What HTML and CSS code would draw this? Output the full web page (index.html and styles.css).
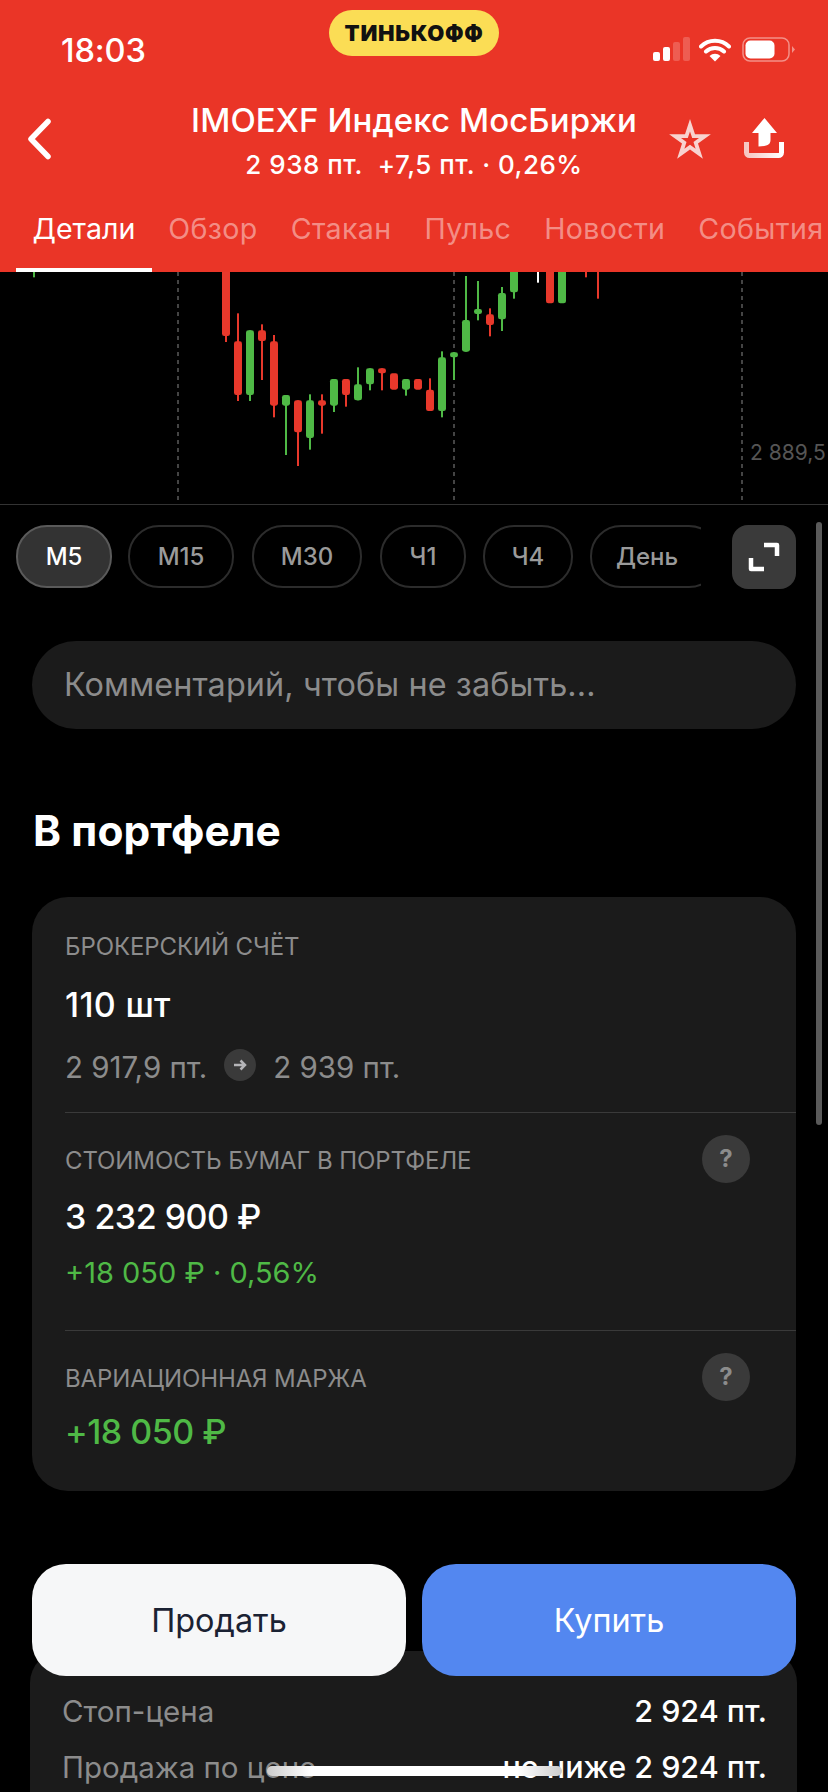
FILE: index.html
```html
<!DOCTYPE html>
<html lang="ru">
<head>
<meta charset="utf-8">
<title>IMOEXF</title>
<link rel="stylesheet" href="styles.css">
</head>
<body>
<div class="screen">
  <header class="top">
    <div class="status">
      <div class="time">18:03</div>
      <div class="brand">ТИНЬКОФФ</div>
      <div class="sys">
        <svg class="sig" width="38" height="24" viewBox="0 0 38 24"><rect x="0" y="15" width="7" height="9" rx="2" fill="#fff"/><rect x="10" y="10" width="7" height="14" rx="2" fill="#fff"/><rect x="20" y="5" width="7" height="19" rx="2" fill="#fff" opacity=".2"/><rect x="30" y="0" width="7" height="24" rx="2" fill="#fff" opacity=".2"/></svg>
        <svg class="wifi" width="32" height="25" viewBox="0 0 32 25"><path d="M2 9.500a20 20 0 0 1 28 0M7 14.500a13 13 0 0 1 18 0" fill="none" stroke="#fff" stroke-width="4" stroke-linecap="round"/><path d="M10.500 19a8 8 0 0 1 11 0L16 24.500z" fill="#fff"/></svg>
        <svg class="batt" width="54" height="25" viewBox="0 0 54 25"><rect x="1" y="1" width="46" height="23" rx="7" fill="none" stroke="#fff" stroke-opacity=".45" stroke-width="1.500"/><rect x="3.500" y="3.500" width="29" height="18" rx="5" fill="#fff"/><path d="M50 9l3 3.500L50 16z" fill="#fff" opacity=".45"/></svg>
      </div>
    </div>
    <div class="nav">
      <div class="nav-left">
        <svg width="26" height="42" viewBox="0 0 26 42"><path d="M22 3.500L5 21l17 17.500" fill="none" stroke="#fff" stroke-width="5.500" stroke-linecap="round" stroke-linejoin="round"/></svg>
      </div>
      <div class="nav-mid">
        <div class="title">IMOEXF Индекс МосБиржи</div>
        <div class="sub">2 938 пт.&nbsp;&nbsp;+7,5 пт. · 0,26%</div>
      </div>
      <div class="nav-right">
        <svg width="44" height="42" viewBox="0 0 44 42"><path d="M22 1L27 16.200H42.900L30 25.600L34.900 40.800L22 31.400L9.100 40.800L14 25.600L1.100 16.200H17z" fill="#f8d3cf"/><path d="M22 13.500L24.200 20H31L25.500 24.100L27.600 30.700L22 26.700L16.400 30.700L18.500 24.100L13 20H19.800z" fill="#ea3527"/></svg>
        <svg width="40" height="40" viewBox="0 0 40 40"><defs><linearGradient id="tray" x1="0" x2="1" y1="0" y2="0"><stop offset="0" stop-color="#f6c6c1"/><stop offset="1" stop-color="#fff"/></linearGradient></defs><path d="M20.500 0L33 15H26.500V22C26.500 26 24 28.500 14.500 28.500V15H8z" fill="#fff"/><path d="M2.500 24V34.500A3 3 0 0 0 5.500 37.500H34.500A3 3 0 0 0 37.500 34.500V24" fill="none" stroke="url(#tray)" stroke-width="5"/></svg>
      </div>
    </div>
    <nav class="tabs">
      <div class="tab active">Детали</div>
      <div class="tab">Обзор</div>
      <div class="tab">Стакан</div>
      <div class="tab">Пульс</div>
      <div class="tab">Новости</div>
      <div class="tab">События</div>
    </nav>
  </header>

  <section class="chart">
    <svg class="chart-svg" width="828" height="232" viewBox="0 0 828 232">
      <g class="grid">
        <line x1="178" x2="178" y1="0" y2="232"/>
        <line x1="454" x2="454" y1="0" y2="232"/>
        <line x1="742" x2="742" y1="0" y2="232"/>
      </g>
      <g transform="translate(180 -7) scale(.33333)">
        <g class="up">
          <rect x="-441" y="0" width="6" height="37"/>
          <rect x="207" y="196" width="6" height="212"/><rect x="198" y="196" width="24" height="194" rx="7"/>
          <rect x="315" y="390" width="6" height="180"/><rect x="306" y="390" width="24" height="32" rx="7"/>
          <rect x="387" y="388" width="6" height="166"/><rect x="378" y="406" width="24" height="113" rx="7"/>
          <rect x="459" y="342" width="6" height="99"/><rect x="450" y="342" width="24" height="80" rx="7"/>
          <rect x="531" y="307" width="6" height="99"/><rect x="522" y="358" width="24" height="48" rx="7"/>
          <rect x="567" y="310" width="6" height="66"/><rect x="558" y="310" width="24" height="48" rx="7"/>
          <rect x="675" y="342" width="6" height="50"/><rect x="666" y="342" width="24" height="32" rx="7"/>
          <rect x="783" y="259" width="6" height="198"/><rect x="774" y="277" width="24" height="161" rx="7"/>
          <rect x="819" y="262" width="6" height="83"/><rect x="810" y="262" width="24" height="15" rx="7"/>
          <rect x="855" y="33" width="6" height="227"/><rect x="846" y="165" width="24" height="95" rx="7"/>
          <rect x="891" y="48" width="6" height="118"/><rect x="882" y="132" width="24" height="15" rx="7"/>
          <rect x="963" y="66" width="6" height="132"/><rect x="954" y="84" width="24" height="79" rx="7"/>
          <rect x="999" y="0" width="6" height="101"/><rect x="990" y="0" width="24" height="82" rx="7"/>
          <rect x="1134" y="0" width="24" height="115" rx="7"/>
        </g>
        <g class="down">
          <rect x="135" y="0" width="6" height="231"/><rect x="126" y="0" width="24" height="213" rx="7"/>
          <rect x="171" y="145" width="6" height="263"/><rect x="162" y="229" width="24" height="161" rx="7"/>
          <rect x="243" y="178" width="6" height="167"/><rect x="234" y="196" width="24" height="32" rx="7"/>
          <rect x="279" y="210" width="6" height="247"/><rect x="270" y="229" width="24" height="193" rx="7"/>
          <rect x="351" y="406" width="6" height="197"/><rect x="342" y="406" width="24" height="96" rx="7"/>
          <rect x="423" y="388" width="6" height="118"/><rect x="414" y="406" width="24" height="16" rx="7"/>
          <rect x="495" y="342" width="6" height="83"/><rect x="486" y="342" width="24" height="48" rx="7"/>
          <rect x="603" y="310" width="6" height="66"/><rect x="594" y="310" width="24" height="15" rx="7"/>
          <rect x="630" y="325" width="24" height="49" rx="7"/>
          <rect x="702" y="342" width="24" height="32" rx="7"/>
          <rect x="747" y="340" width="6" height="98"/><rect x="738" y="374" width="24" height="64" rx="7"/>
          <rect x="927" y="130" width="6" height="84"/><rect x="918" y="148" width="24" height="32" rx="7"/>
          <rect x="1098" y="0" width="24" height="115" rx="7"/>
          <rect x="1215" y="0" width="6" height="37"/>
          <rect x="1251" y="0" width="6" height="101"/>
        </g>
        <rect x="1071" y="0" width="6" height="53" fill="#fff"/>
      </g>
      <text class="axis" x="750" y="188">2 889,5</text>
    </svg>
  </section>

  <div class="periods">
    <div class="chips">
      <div class="chip on">М5</div>
      <div class="chip c15">М15</div>
      <div class="chip c30">М30</div>
      <div class="chip c1">Ч1</div>
      <div class="chip c4">Ч4</div>
      <div class="chip cd">День</div>
    </div>
    <div class="expand">
      <svg width="32" height="30" viewBox="0 0 32 30"><path d="M16 3H29V14M3 16V27H16" fill="none" stroke="#fff" stroke-width="4.500" stroke-linejoin="round"/></svg>
    </div>
  </div>

  <div class="note">Комментарий, чтобы не забыть...</div>

  <h2 class="heading">В портфеле</h2>

  <section class="card">
    <div class="sec first">
      <div class="label plain">БРОКЕРСКИЙ СЧЁТ</div>
      <div class="big v1">110 шт</div>
      <div class="prices">
        <span>2 917,9 пт.</span>
        <span class="arrow"><svg width="16" height="14" viewBox="0 0 16 14"><path d="M2 7H13M8.500 2.500L13 7l-4.500 4.500" fill="none" stroke="#b5b5b8" stroke-width="2.500"/></svg></span>
        <span>2 939 пт.</span>
      </div>
    </div>
    <div class="sec second">
      <div class="label-row"><span class="label">СТОИМОСТЬ БУМАГ В ПОРТФЕЛЕ</span><span class="help">?</span></div>
      <div class="big v2">3 232 900 ₽</div>
      <div class="delta">+18 050 ₽ · 0,56%</div>
    </div>
    <div class="sec third">
      <div class="label-row"><span class="label">ВАРИАЦИОННАЯ МАРЖА</span><span class="help">?</span></div>
      <div class="big green v3">+18 050 ₽</div>
    </div>
  </section>

  <section class="order">
    <div class="order-row"><span class="k">Стоп-цена</span><span class="v">2 924 пт.</span></div>
    <div class="order-row"><span class="k">Продажа по цене</span><span class="v">не ниже 2 924 пт.</span></div>
  </section>

  <div class="actions">
    <div class="btn sell">Продать</div>
    <div class="btn buy">Купить</div>
  </div>
  <div class="scrollbar"></div>
  <div class="home"></div>
</div>
</body>
</html>
```
FILE: styles.css
```css
* { box-sizing: border-box; }
html, body { margin: 0; padding: 0; background: #000; }
body { font-family: Inter, Roboto, "Liberation Sans", sans-serif; color: #fff; }
.screen { position: relative; width: 828px; height: 1792px; overflow: hidden; background: #000; }

.top { background: #ea3527; height: 272px; overflow: hidden; }
.status { height: 72px; display: grid; grid-template-columns: 329px 170px 1fr; }
.time { padding: 33px 0 0 61px; font-size: 32.600px; line-height: 34px; font-weight: 500; letter-spacing: -.1px; }
.brand { margin-top: 10px; height: 46px; border-radius: 23px; background: #fbdd55; color: #111; font-size: 22px; font-weight: 900; line-height: 46px; text-align: center; letter-spacing: .7px; }
.sys { display: flex; align-items: flex-start; padding: 37px 0 0 154px; gap: 8px; }
.sig { flex: none; }
.wifi { flex: none; }
.batt { flex: none; margin-left: 3px; }

.nav { display: grid; grid-template-columns: 160px 1fr 160px; padding-top: 28px; }
.nav-left { padding: 18px 0 0 26px; }
.nav-mid { text-align: center; }
.title { font-size: 33px; line-height: 40px; font-weight: 500; white-space: nowrap; letter-spacing: .1px; }
.sub { margin-top: 9px; font-size: 26px; line-height: 32px; font-weight: 500; white-space: nowrap; letter-spacing: .5px; }
.nav-right { display: flex; gap: 32px; padding-top: 18px; align-items: flex-start; }
.nav-right svg { flex: none; }

.tabs { display: flex; margin-top: 30px; padding-left: 16px; white-space: nowrap; }
.tab { padding: 0 16.500px 21px; font-size: 28.600px; line-height: 36px; letter-spacing: .35px; color: rgba(255,255,255,.45); border-bottom: 4px solid transparent; }
.tab.active { color: #fff; letter-spacing: 0; border-bottom-color: #fff; }

.chart { height: 233px; border-bottom: 1px solid #333; }
.chart-svg { display: block; }
.grid line { stroke: #444; stroke-width: 2; stroke-dasharray: 4 4; }
.up rect { fill: #4fb946; }
.down rect { fill: #e8382b; }
.axis { fill: #555; font-size: 21px; font-family: Inter, Roboto, sans-serif; }

.periods { display: flex; margin-top: 20px; padding-left: 16px; height: 64px; }
.chips { width: 685px; flex: none; display: flex; overflow: hidden; }
.chip { flex: none; height: 63px; border: 2px solid #2c2c2c; border-radius: 31px; color: #9a9a9a; font-size: 24px; line-height: 59px; text-align: center; font-weight: 500; margin-right: 17px; }
.chip.on { width: 96px; background: #333; border-color: #5a5a5a; color: #fff; margin-right: 16px; }
.c15 { width: 106px; margin-right: 18px !important; }
.c30 { width: 110px; margin-right: 18px !important; }
.c1 { width: 86px; }
.c4 { width: 90px; }
.cd { width: 130px; padding-right: 16px; }
.expand { flex: none; width: 64px; height: 64px; margin-left: 31px; border-radius: 16px; background: #3a3a3a; display: flex; align-items: center; justify-content: center; }

.note { margin: 52px 32px 0; height: 88px; border-radius: 44px; background: #1b1b1b; color: #8c8c8c; font-size: 32.400px; line-height: 88px; padding-left: 32px; letter-spacing: .1px; }
.heading { margin: 78px 0 0 33px; font-size: 42.400px; line-height: 48px; font-weight: 700; letter-spacing: .1px; }

.card { margin: 42px 32px 0; height: 594px; border-radius: 36px; background: #1b1b1b; padding-left: 33px; }
.sec { border-bottom: 1px solid #3a3a3a; }
.sec.third { border-bottom: 0; }
.first { padding: 36px 0 27px; }
.second { padding: 22px 46px 39px 0; }
.third { padding: 22px 46px 0 0; }
.label { display: block; font-size: 24px; line-height: 28px; color: #8c8c8c; letter-spacing: -.1px; }
.label-row { display: flex; justify-content: space-between; align-items: center; height: 48px; }
.label-row .label { margin-top: 4px; }
.help { flex: none; width: 48px; height: 48px; border-radius: 50%; background: #3a3a3a; color: #8c8c8c; font-size: 24px; font-weight: 700; line-height: 48px; text-align: center; }
.big { font-size: 34px; line-height: 40px; font-weight: 500; }
.v1 { margin-top: 24px; letter-spacing: .3px; }
.v2 { margin-top: 14px; letter-spacing: -.5px; }
.v3 { margin-top: 11px; letter-spacing: -.5px; }
.green { color: #4fb946; }
.prices { margin-top: 24px; display: flex; align-items: center; height: 36px; font-size: 29.500px; line-height: 36px; color: #8c8c8c; gap: 17px; }
.arrow { width: 32px; height: 32px; border-radius: 50%; background: #3a3a3a; display: flex; align-items: center; justify-content: center; margin-top: -4px; }
.delta { margin-top: 18px; font-size: 29px; line-height: 36px; color: #4fb946; }

.order { margin: 160px 31px 0 30px; height: 300px; border-radius: 32px; background: #1b1b1b; padding: 42px 30px 0 32px; }
.order-row { display: flex; justify-content: space-between; font-size: 29.500px; line-height: 36px; margin-bottom: 20px; }
.k { color: #8c8c8c; }
.v { font-weight: 500; font-size: 30.500px; }

.actions { position: absolute; left: 32px; right: 32px; top: 1564px; display: grid; grid-template-columns: 1fr 1fr; gap: 16px; }
.btn { height: 112px; border-radius: 34px; font-size: 32.400px; line-height: 114px; text-align: center; }
.sell { background: #f6f7f8; color: #1a2233; }
.buy { background: #5387f0; color: #fff; }
.scrollbar { position: absolute; left: 816px; top: 522px; width: 6px; height: 603px; border-radius: 3px; background: #5a5a5a; }
.home { position: absolute; left: 267px; top: 1766px; width: 295px; height: 10px; border-radius: 5px; background: linear-gradient(90deg, #ccc, #fff 15%, #fff 85%, #ccc); }
```
